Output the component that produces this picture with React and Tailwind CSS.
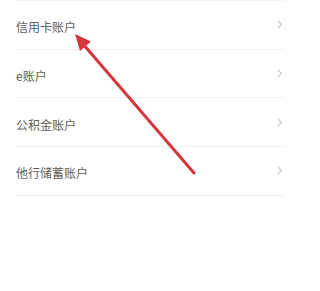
import React from 'react';

const accounts = ['信用卡账户', 'e账户', '公积金账户', '他行储蓄账户'];

const Chevron = () => (
  <svg width="6" height="9" viewBox="0 0 6 9" fill="none" stroke="#c8c8c8" strokeWidth="1.1">
    <path d="M1 1l3.5 3.5L1 8" />
  </svg>
);

export default function App() {
  return (
    <div className="relative w-[300px] h-[291px] bg-white overflow-hidden font-['Noto_Sans_CJK_SC',sans-serif]">
      {/* account list */}
      <div className="mx-4 mr-[15px] border-t border-[#f5f5f5]">
        {accounts.map((name) => (
          <div key={name} className="flex items-center justify-between h-[48.7px] border-b border-[#f1f1f1] pr-[2px]">
            <span className="text-[12px] text-[#606060] leading-none pt-[5px]">{name}</span>
            <Chevron />
          </div>
        ))}
      </div>

      {/* red annotation arrow */}
      <svg className="absolute inset-0 pointer-events-none" width="300" height="291" viewBox="0 0 300 291">
        <line x1="194" y1="173" x2="83" y2="44" stroke="#d8363d" strokeWidth="3" strokeLinecap="round" />
        <polygon points="75,34 91,41.5 80,51" fill="#d8363d" />
      </svg>
    </div>
  );
}
